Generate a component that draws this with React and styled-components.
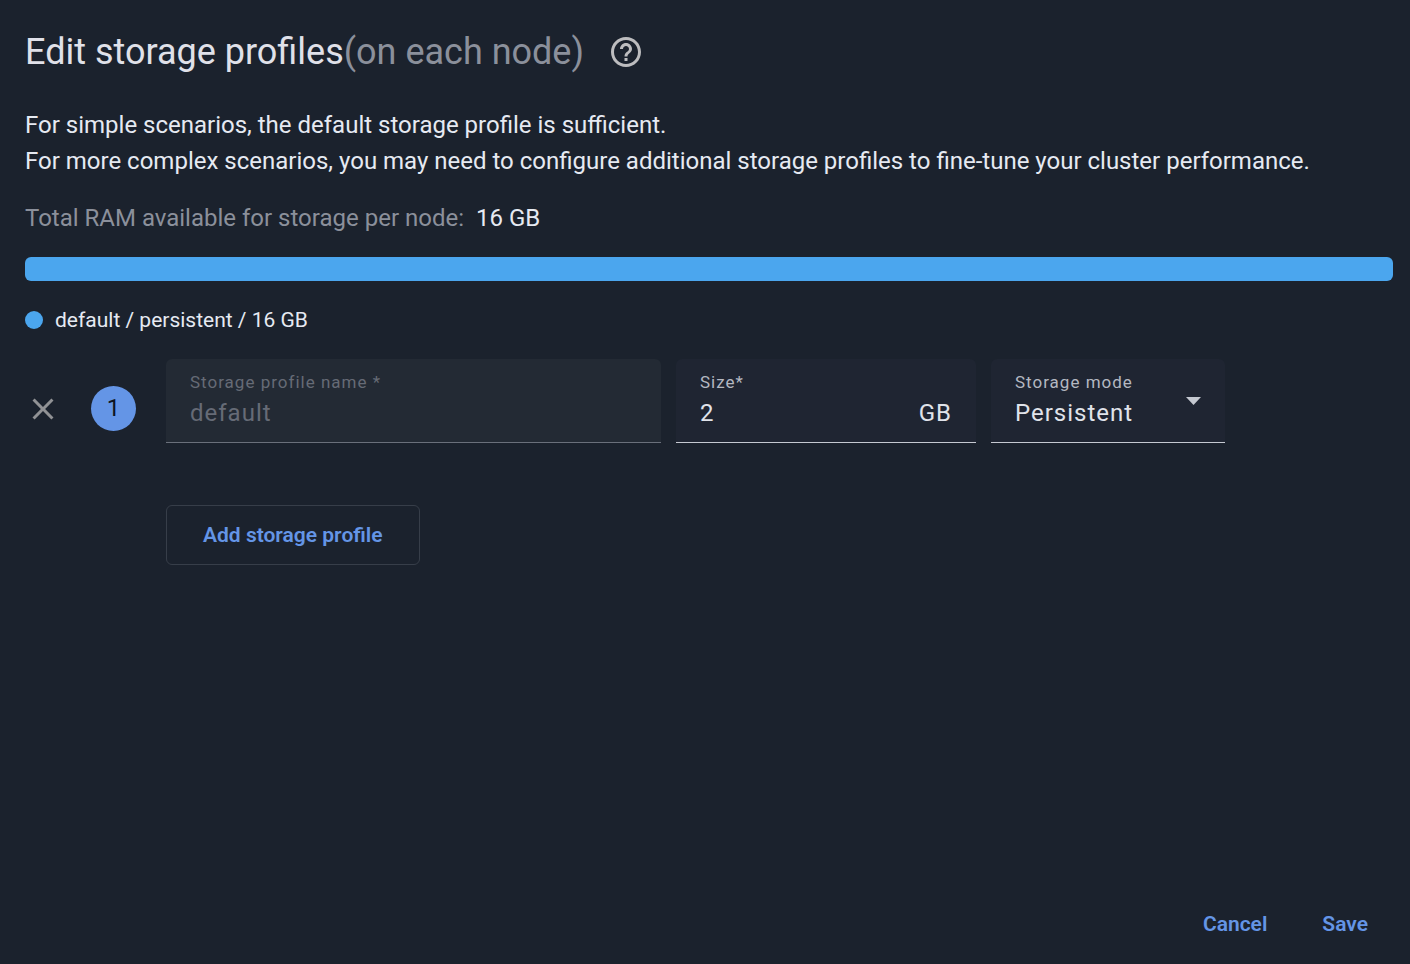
import React, { Component } from "react";
import styled, { createGlobalStyle } from "styled-components";

const GlobalStyle = createGlobalStyle`
 * {
  box-sizing: border-box;
 }
 body {
  margin: 0;
  background: #1b222d;
  color: #e6eaf2;
  font-family: Roboto, sans-serif;
 }
 button, input, select {
  font-family: inherit;
 }
`;

const Page = styled.main`
 display: flex;
 flex-direction: column;
 min-height: 100vh;
 padding: 24px 17px 10px 25px;
`;

const Header = styled.header`
 display: flex;
 align-items: center;
 gap: 24px;
 height: 56px;
`;

const Title = styled.h1`
 margin: 0;
 font-size: 36px;
 font-weight: 400;
 line-height: 56px;
 color: #e0e1e9;
`;

const Muted = styled.span`
 color: #8b909b;
`;

const IconButton = styled.button`
 display: flex;
 align-items: center;
 justify-content: center;
 flex: none;
 width: 36px;
 height: 36px;
 padding: 0;
 border: 0;
 background: none;
 color: ${props => props.$color};
 cursor: pointer;
`;

const Description = styled.p`
 margin: 27px 0 0;
 font-size: 24px;
 line-height: 36px;
`;

const Total = styled.p`
 display: flex;
 gap: 12px;
 margin: 21px 0 0;
 font-size: 24px;
 line-height: 36px;
`;

const UsageBar = styled.div`
 display: flex;
 height: 24px;
 margin-top: 21px;
 border-radius: 6px;
 overflow: hidden;
 background: #2b323d;
`;

const UsagePart = styled.div`
 background: #4ba6ee;
`;

const Legend = styled.ul`
 display: flex;
 flex-wrap: wrap;
 gap: 24px;
 margin: 24px 0 0;
 padding: 0;
 list-style: none;
`;

const LegendItem = styled.li`
 display: flex;
 align-items: center;
 gap: 12px;
 font-size: 21px;
 line-height: 30px;

 &::before {
  content: "";
  width: 18px;
  height: 18px;
  border-radius: 50%;
  background: #4ba6ee;
 }
`;

const ProfileRow = styled.div`
 display: flex;
 align-items: flex-start;
 gap: 15px;
 margin-top: 24px;
`;

const RowLead = styled.div`
 display: flex;
 align-items: center;
 justify-content: space-between;
 flex: none;
 width: 111px;
 height: 99px;
 margin-right: 15px;
`;

const RowNumber = styled.span`
 width: 45px;
 height: 45px;
 border-radius: 50%;
 background: #6495e6;
 color: #0e1522;
 font-size: 24px;
 line-height: 45px;
 text-align: center;
`;

const Field = styled.div`
 display: flex;
 align-items: center;
 flex: 0 1 ${props => props.$width};
 min-width: 0;
 height: 84px;
 padding: 0 24px;
 border-bottom: 1px solid ${props => (props.$disabled ? "#6a707b" : "#c5c9d1")};
 border-radius: 6px 6px 0 0;
 background: ${props => (props.$disabled ? "#232a34" : "#1f2532")};
 color: ${props => (props.$disabled ? "#666b76" : "#e0e3ea")};
 letter-spacing: 1px;
`;

const FieldBody = styled.div`
 display: flex;
 flex-direction: column;
 gap: 2px;
 flex: 1;
 min-width: 0;
`;

const FieldLabel = styled.label`
 font-size: 17px;
 line-height: 22px;
 color: ${props => (props.$disabled ? "#666b76" : "#b4b8c1")};
`;

const FieldLine = styled.div`
 display: flex;
 font-size: 24px;
 line-height: 36px;
`;

const Input = styled.input`
 flex: 1;
 min-width: 0;
 height: 36px;
 padding: 0;
 border: 0;
 outline: 0;
 background: none;
 color: inherit;
 font-size: 24px;
 letter-spacing: inherit;
`;

const Select = styled.select`
 width: 100%;
 height: 36px;
 padding: 0;
 border: 0;
 outline: 0;
 appearance: none;
 background: none;
 color: inherit;
 font-size: 24px;
 letter-spacing: inherit;

 option {
  background: #1f2532;
 }
`;

const Arrow = styled.svg`
 flex: none;
 width: 15px;
 height: 9px;
 fill: #c5c9d1;
`;

const Button = styled.button`
 height: 60px;
 padding: 0 ${props => (props.$outlined ? "36px" : "25px")};
 border: ${props => (props.$outlined ? "1px solid #373e49" : "0")};
 border-radius: 6px;
 background: none;
 color: #6495e6;
 font-size: 21px;
 font-weight: 600;
 cursor: pointer;
`;

const AddRow = styled.div`
 margin: 47px 0 24px 141px;
`;

const Footer = styled.footer`
 display: flex;
 justify-content: flex-end;
 gap: 5px;
 margin-top: auto;
`;

const HelpIcon = () => (
 <svg width="36" height="36" viewBox="0 0 24 24" fill="currentColor" aria-hidden="true">
  <path d="M11 18h2v-2h-2v2zm1-16C6.48 2 2 6.48 2 12s4.48 10 10 10 10-4.48 10-10S17.52 2 12 2zm0 18c-4.41 0-8-3.59-8-8s3.59-8 8-8 8 3.59 8 8-3.59 8-8 8zm0-14c-2.21 0-4 1.79-4 4h2c0-1.1.9-2 2-2s2 .9 2 2c0 2-3 1.75-3 5h2c0-2.25 3-2.5 3-5 0-2.21-1.79-4-4-4z" />
 </svg>
);

const CloseIcon = () => (
 <svg width="36" height="36" viewBox="0 0 24 24" fill="currentColor" aria-hidden="true">
  <path d="M19 6.41L17.59 5 12 10.59 6.41 5 5 6.41 10.59 12 5 17.59 6.41 19 12 13.41 17.59 19 19 17.59 13.41 12z" />
 </svg>
);

class App extends Component {
 state = {
  total: 16,
  usage: [{ name: "default", mode: "persistent", size: 16 }],
  size: "2",
  mode: "Persistent"
 };
 onChange = e => {
  this.setState({ [e.target.name]: e.target.value });
 };
 render() {
  const { total, usage, size, mode } = this.state;
  return (
   <Page>
    <GlobalStyle />
    <Header>
     <Title>
      Edit storage profiles<Muted>(on each node)</Muted>
     </Title>
     <IconButton type="button" aria-label="Help" $color="#bdbdbf">
      <HelpIcon />
     </IconButton>
    </Header>
    <Description>
     For simple scenarios, the default storage profile is sufficient.
     <br />
     For more complex scenarios, you may need to configure additional storage profiles to fine-tune your cluster
     performance.
    </Description>
    <Total>
     <Muted>Total RAM available for storage per node:</Muted>
     <span>{total} GB</span>
    </Total>
    <UsageBar>
     {usage.map(item => (
      <UsagePart key={item.name} style={{ width: `${(item.size / total) * 100}%` }} />
     ))}
    </UsageBar>
    <Legend>
     {usage.map(item => (
      <LegendItem key={item.name}>{`${item.name} / ${item.mode} / ${item.size} GB`}</LegendItem>
     ))}
    </Legend>

    <ProfileRow>
     <RowLead>
      <IconButton type="button" aria-label="Remove profile" $color="#919295">
       <CloseIcon />
      </IconButton>
      <RowNumber>1</RowNumber>
     </RowLead>
     <Field $width="495px" $disabled>
      <FieldBody>
       <FieldLabel htmlFor="name" $disabled>
        Storage profile name *
       </FieldLabel>
       <FieldLine>
        <Input id="name" name="name" value="default" disabled readOnly />
       </FieldLine>
      </FieldBody>
     </Field>
     <Field $width="300px">
      <FieldBody>
       <FieldLabel htmlFor="size">Size*</FieldLabel>
       <FieldLine>
        <Input id="size" name="size" value={size} onChange={this.onChange} />
        <span>GB</span>
       </FieldLine>
      </FieldBody>
     </Field>
     <Field $width="234px">
      <FieldBody>
       <FieldLabel htmlFor="mode">Storage mode</FieldLabel>
       <Select id="mode" name="mode" value={mode} onChange={this.onChange}>
        <option>Persistent</option>
        <option>Transient</option>
       </Select>
      </FieldBody>
      <Arrow viewBox="0 0 15 9" aria-hidden="true">
       <path d="M0 1h15L7.5 9z" />
      </Arrow>
     </Field>
    </ProfileRow>
    <AddRow>
     <Button type="button" $outlined>
      Add storage profile
     </Button>
    </AddRow>

    <Footer>
     <Button type="button">Cancel</Button>
     <Button type="button">Save</Button>
    </Footer>
   </Page>
  );
 }
}

export default App;
